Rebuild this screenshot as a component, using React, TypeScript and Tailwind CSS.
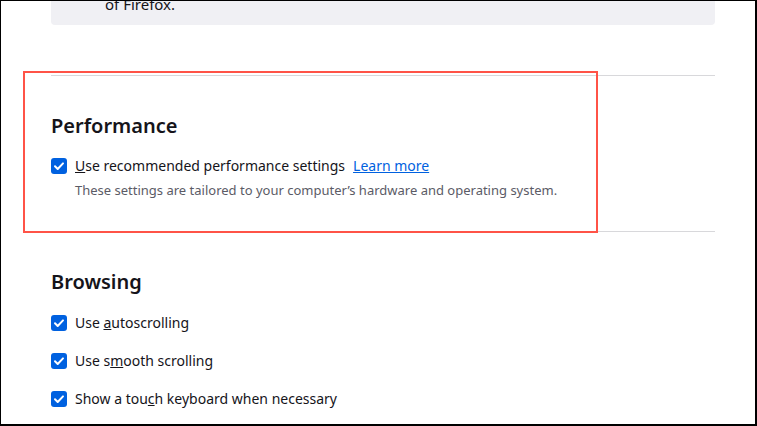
import React from 'react';

const Check: React.FC = () => (
  <span className="flex h-4 w-4 shrink-0 items-center justify-center rounded-[3px] bg-[#0061e0]">
    <svg viewBox="0 0 16 16" className="h-4 w-4" fill="none">
      <path d="M4 8.3l2.7 2.7L12 5.4" stroke="white" strokeWidth="2" strokeLinecap="round" strokeLinejoin="round" />
    </svg>
  </span>
);

const Row: React.FC<{ children: React.ReactNode; className?: string }> = ({ children, className }) => (
  <label className={`flex items-center gap-2 text-[14px] leading-[20px] text-[#15141a] ${className ?? ''}`}>
    <Check />
    <span>{children}</span>
  </label>
);

const App: React.FC = () => {
  return (
    <div
      className="relative h-[426px] w-[757px] overflow-hidden border-t border-l border-r-2 border-b-2 border-black bg-white"
      style={{ fontFamily: '"Noto Sans", "Open Sans", sans-serif' }}
    >
      <div className="ml-[50px] w-[664px]">
        {/* tail of previous notice */}
        <div className="-mt-[7px] rounded-b-[4px] bg-[#f0f0f4] pb-[11px] pl-[54px] text-[15px] leading-[20px] text-[#15141a]">
          of Firefox.
        </div>

        <div className="mt-[50px] h-px bg-[#d8d8db]" />

        {/* Performance */}
        <h2 className="mt-[36px] text-[20px] font-semibold leading-[28px] text-[#15141a]">Performance</h2>
        <Row className="mt-[16px]">
          <span className="underline">U</span>se recommended performance settings
          <a href="#" className="ml-2 text-[#0061e0] underline">Learn more</a>
        </Row>
        <p className="mt-[5px] pl-6 text-[13px] leading-[18px] text-[#5b5b66]">
          These settings are tailored to your computer’s hardware and operating system.
        </p>

        <div className="mt-[32px] h-px bg-[#d8d8db]" />

        {/* Browsing */}
        <h2 className="mt-[36px] text-[20px] font-semibold leading-[28px] text-[#15141a]">Browsing</h2>
        <div className="mt-[17px] flex flex-col gap-[18px]">
          <Row>
            Use <span className="underline">a</span>utoscrolling
          </Row>
          <Row>
            Use s<span className="underline">m</span>ooth scrolling
          </Row>
          <Row>
            Show a tou<span className="underline">c</span>h keyboard when necessary
          </Row>
        </div>
      </div>

      {/* highlight annotation */}
      <div className="absolute left-[22px] top-[70px] h-[162px] w-[575px] border-2 border-[#ff5347]" />
    </div>
  );
};

export default App;
